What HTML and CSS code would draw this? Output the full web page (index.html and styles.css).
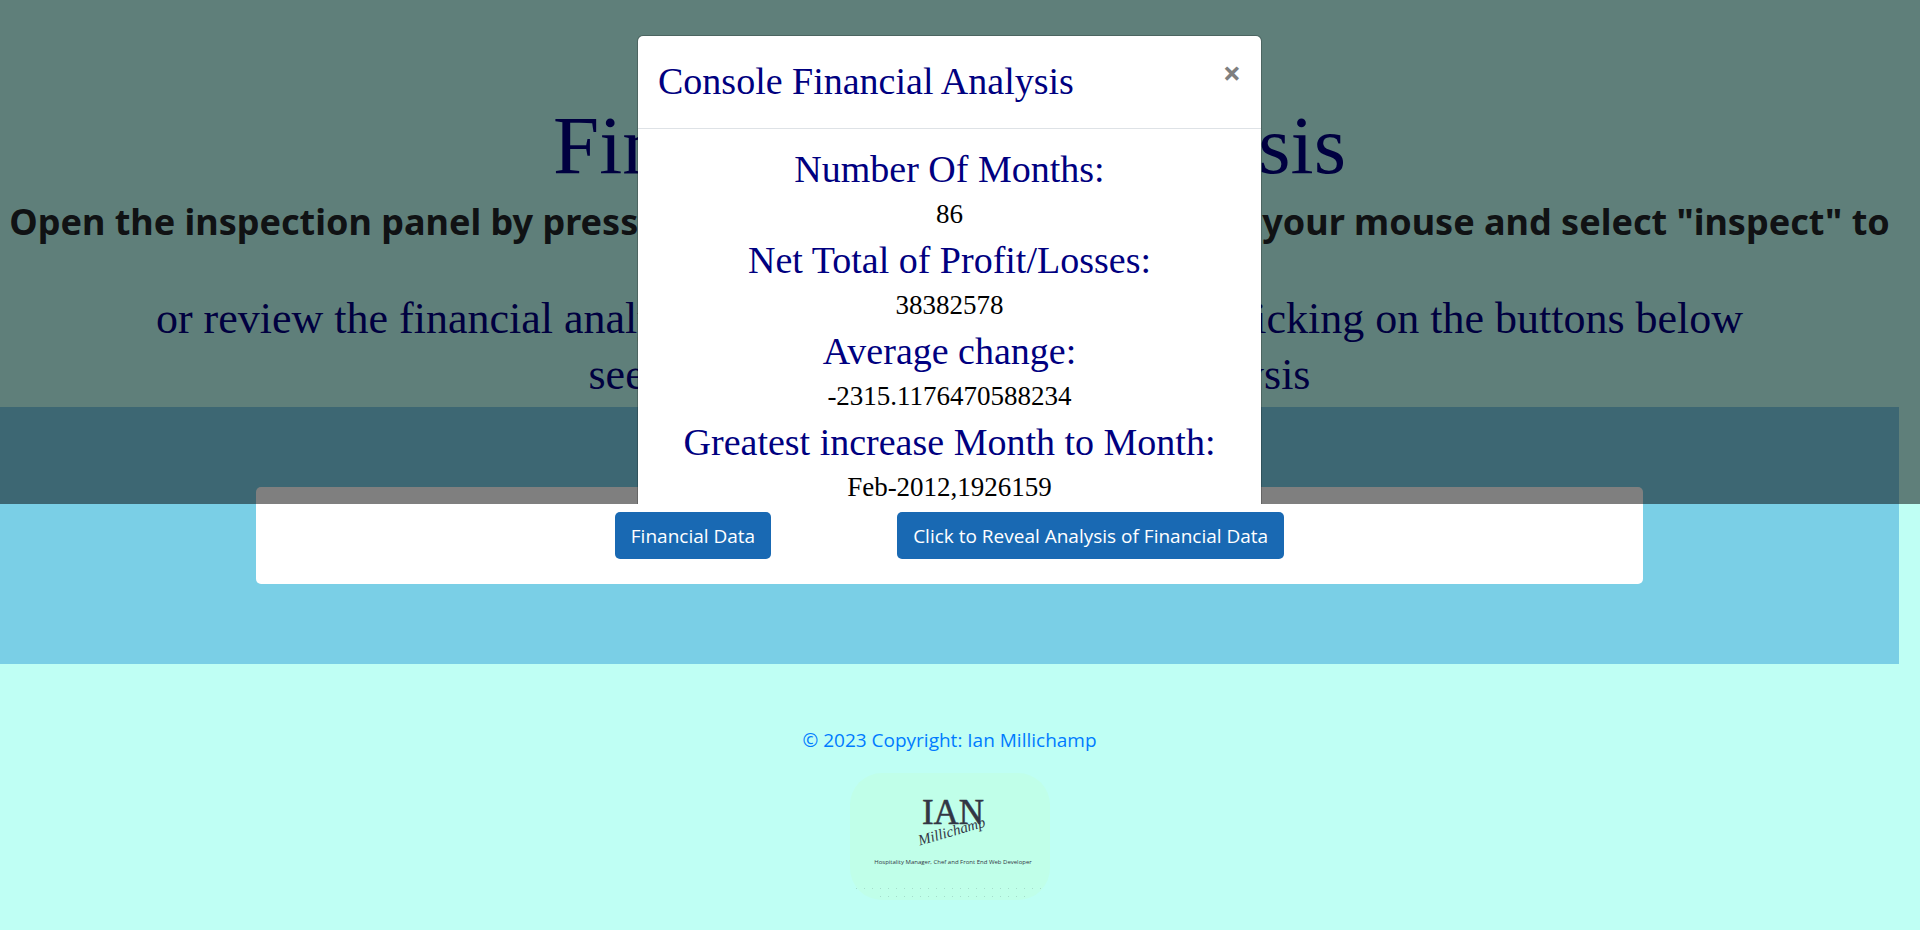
FILE: index.html
```html
<!DOCTYPE html>
<html lang="en">
<head>
<meta charset="utf-8">
<title>Financial Data Analysis</title>
<link rel="stylesheet" href="styles.css">
</head>
<body>
<header class="hero">
  <h1 class="hero-title">Financial Data Analysis</h1>
  <p class="hero-note">Open the inspection panel by pressing "F12" or by right clicking using your mouse and select "inspect" to<br>view the console</p>
  <h2 class="hero-lead">or review the financial analysis of the data provided here by clicking on the buttons below<br>see financial data or see the data analysis</h2>
</header>
<main class="band">
  <div class="card">
    <button class="btn" type="button">Financial Data</button>
    <button class="btn" type="button">Click to Reveal Analysis of Financial Data</button>
  </div>
</main>
<footer class="footer">
  <a class="copyright" href="#">© 2023 Copyright: Ian Millichamp</a>
  <svg class="logo" viewBox="0 0 200 127" role="img" aria-label="Ian Millichamp">
    <defs>
      <pattern id="dots" x="6" y="115" width="8" height="8" patternUnits="userSpaceOnUse"><rect width="1" height="1" fill="#a5dccb"/></pattern>
    </defs>
    <rect width="200" height="127" rx="32" fill="#c0ffe9"/>
    <path d="M98 33l-7 15h13zM115 38l14 16-12 1z" fill="#bcfff4"/>
    <text class="logo-name" x="103" y="51">IAN</text>
    <text class="logo-script" x="103" y="63" transform="rotate(-16 103 63)">Millichamp</text>
    <text class="logo-tag" x="103" y="91">Hospitality Manager, Chef and Front End Web Developer</text>
    <rect x="6" y="115" width="188" height="2" fill="url(#dots)"/>
    <rect x="30" y="123" width="146" height="2" fill="url(#dots)"/>
  </svg>
</footer>
<div class="overlay">
  <section class="modal" role="dialog" aria-labelledby="modal-title">
    <div class="modal-header">
      <h3 class="heading" id="modal-title">Console Financial Analysis</h3>
      <button class="close" type="button" aria-label="Close">×</button>
    </div>
    <div class="modal-body">
      <h3 class="heading">Number Of Months:</h3>
      <p class="value">86</p>
      <h3 class="heading">Net Total of Profit/Losses:</h3>
      <p class="value">38382578</p>
      <h3 class="heading">Average change:</h3>
      <p class="value">-2315.1176470588234</p>
      <h3 class="heading">Greatest increase Month to Month:</h3>
      <p class="value">Feb-2012,1926159</p>
    </div>
  </section>
</div>
</body>
</html>
```
FILE: styles.css
```css
* { box-sizing: border-box; }

body {
  margin: 0;
  padding-right: 21px;
  background: #bffff4;
  color: #212529;
  font: 20px/30px "Open Sans", "Noto Sans", sans-serif;
  position: relative;
  overflow: hidden;
}

h1, h2, h3, p { margin: 0; font-weight: 400; }

.hero { padding-top: 97px; text-align: center; white-space: nowrap; }
.hero-title, .hero-lead, .heading, .value { font-family: Georgia, "Liberation Serif", serif; }
.hero-title, .hero-lead, .heading { color: #000080; }
.hero-title { font-size: 83px; line-height: 96px; }
.hero-note {
  margin-top: 8px;
  font: 700 36px/42px "Noto Sans", sans-serif;
}
.hero-lead { margin-top: 6px; font-size: 44px; line-height: 56px; }

.band { margin-top: 4px; padding: 80px 256px; background: #7acfe6; }
.card {
  display: flex;
  justify-content: center;
  gap: 126px;
  padding: 25px;
  border-radius: 5px;
  background: #fff;
}
.btn {
  height: 47px;
  padding: 0 16px;
  border: 0;
  border-radius: 5px;
  background: #1969b3;
  color: #fff;
  font: 19px/30px "Open Sans", "Noto Sans", sans-serif;
}

.footer {
  display: flex;
  flex-direction: column;
  align-items: center;
  gap: 18px;
  padding: 61px 0 30px;
}
.copyright { color: #007bff; font-size: 19px; text-decoration: none; }
.logo { display: block; width: 200px; height: 127px; }
.logo text { fill: #323644; text-anchor: middle; }
.logo .logo-name { font: 35px "Liberation Serif", serif; stroke: #323644; stroke-width: 0.5; }
.logo-script { font: italic 15px "Liberation Serif", serif; }
.logo-tag { font: 6px "Open Sans", sans-serif; }

.overlay {
  position: absolute;
  top: 0;
  left: 0;
  right: 0;
  height: 504px;
  padding: 35px 21px 0 0;
  overflow: hidden;
  background: rgba(0, 0, 0, 0.5);
}
.modal {
  width: 625px;
  max-width: 100%;
  margin: 0 auto;
  border: 1px solid rgba(0, 0, 0, 0.2);
  border-radius: 6px;
  background: #fff;
  background-clip: padding-box;
}
.modal-header {
  display: flex;
  justify-content: space-between;
  align-items: flex-start;
  height: 93px;
  padding: 24px 20px;
  border-bottom: 1px solid #dee2e6;
}
.heading { font-size: 38px; line-height: 42px; }
.close {
  padding: 0;
  border: 0;
  background: none;
  color: #7f7f7f;
  font: 700 32px/26px "Open Sans", sans-serif;
}
.modal-body { padding: 19px 20px; color: #000; text-align: center; }
.value { margin: 6px 0 7px; font-size: 27px; line-height: 36px; }
```
